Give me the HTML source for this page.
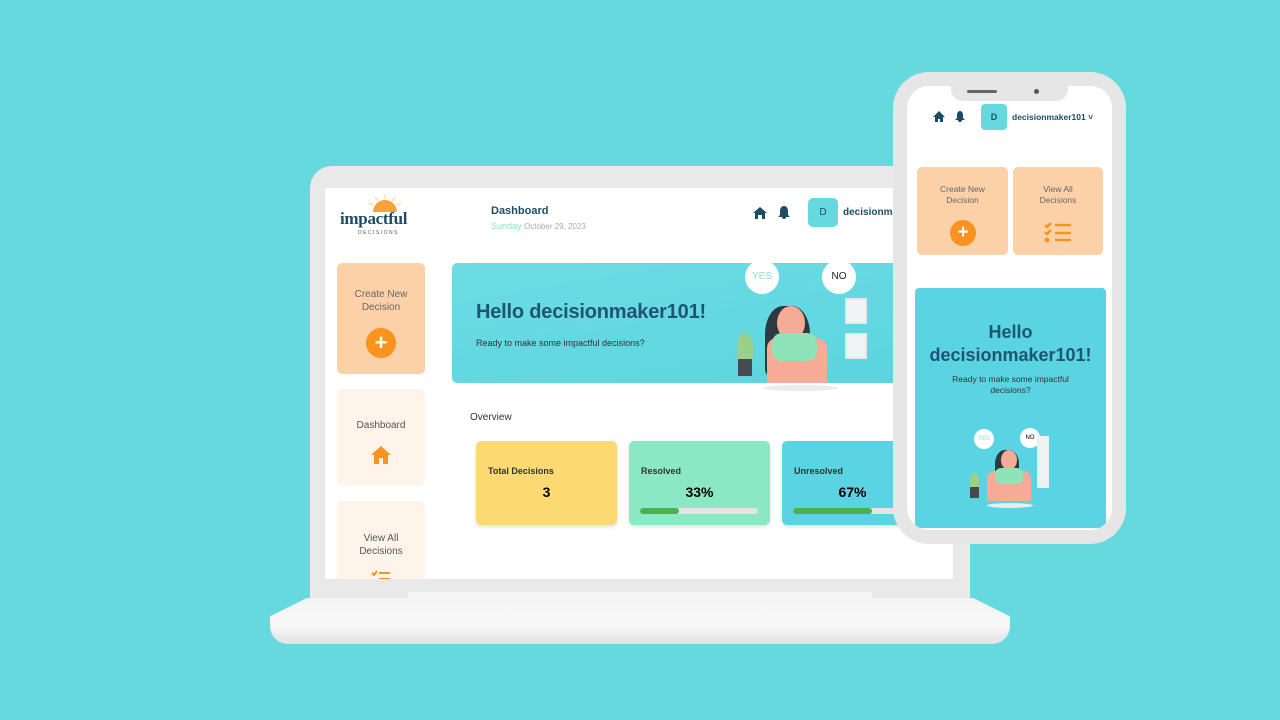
<!DOCTYPE html>
<html><head><meta charset="utf-8"><style>
*{margin:0;padding:0;box-sizing:border-box}
body{width:1280px;height:720px;background:#66d9df;position:relative;overflow:hidden;font-family:"Liberation Sans",sans-serif}
.a{position:absolute}
.lid{left:310px;top:166px;width:660px;height:440px;background:#e9e9e9;border-radius:22px 22px 0 0}
.scr{left:325px;top:188px;width:628px;height:391px;background:#fff;overflow:hidden}
.base{left:270px;top:598px;width:740px;height:46px;background:linear-gradient(#f4f4f4,#f7f7f7 60%,#e2e2e2);border-radius:4px 4px 18px 18px;clip-path:polygon(5% 0,95% 0,100% 40%,100% 100%,0 100%,0 40%)}
.hinge{left:408px;top:592px;width:464px;height:9px;background:#f5f5f5;border-radius:2px}
.card{border-radius:5px}
.dk{color:#1d4d66}
.bar{height:6px;background:#e4e4e4;border-radius:3px}
.bar i{display:block;height:6px;background:#4caf50;border-radius:3px}
.phone{left:893px;top:72px;width:233px;height:472px;background:#e6e6e6;border-radius:36px}
.pscr{left:907px;top:86px;width:205px;height:444px;background:#fff;border-radius:22px;overflow:hidden}
.plus{border-radius:50%;background:#f7931e;color:#fff;text-align:center;font-weight:bold}
</style></head><body>
<div class="a lid"></div>
<div class="a hinge"></div>
<div class="a base"></div>
<div class="a scr">
  <svg class="a" style="left:30px;top:4px" width="60" height="20"><path d="M18 20a12 12 0 0 1 24 0z" fill="#f7a33a"/><g stroke="#f7c57a" stroke-width="0.8"><line x1="30" y1="2" x2="30" y2="7"/><line x1="20" y1="5" x2="23" y2="9"/><line x1="40" y1="5" x2="37" y2="9"/><line x1="14" y1="11" x2="18" y2="13"/><line x1="46" y1="11" x2="42" y2="13"/></g></svg>
  <div class="a dk" style="left:15px;top:21px;font-family:'Liberation Serif',serif;font-size:17px;font-weight:bold;color:#1d4d66;letter-spacing:-0.3px">impactful</div>
  <div class="a" style="left:33px;top:42px;font-size:5px;letter-spacing:1.5px;color:#555">DECISIONS</div>
  <div class="a dk" style="left:166px;top:17px;font-size:11px;font-weight:bold">Dashboard</div>
  <div class="a" style="left:166px;top:33px;font-size:9px;color:#8fe3c0">Sunday <span style="color:#aaa;font-size:8px">October 29, 2023</span></div>
  <svg class="a" style="left:428px;top:18px" width="14" height="13"><path d="M7 1 L14 7 H12 V13 H9 V9 H5 V13 H2 V7 H0z" fill="#1d4d66"/></svg>
  <svg class="a" style="left:453px;top:17px" width="12" height="14"><path d="M6 1C3 1 2 4 2 6V10L0 12H12L10 10V6C10 4 9 1 6 1z M4 12a2 2 0 0 0 4 0z" fill="#1d4d66"/></svg>
  <div class="a" style="left:483px;top:10px;width:30px;height:29px;background:#66d9df;border-radius:5px;text-align:center;line-height:29px;font-size:10px;color:#1d4d66">D</div>
  <div class="a dk" style="left:518px;top:19px;font-size:10px;font-weight:bold;white-space:nowrap">decisionmaker101</div>
  <div class="a card" style="left:12px;top:75px;width:88px;height:111px;background:#fdd1a8"></div>
  <div class="a" style="left:12px;top:100px;width:88px;text-align:center;font-size:10px;color:#666;line-height:13px">Create New<br>Decision</div>
  <div class="a plus" style="left:41px;top:140px;width:30px;height:30px;font-size:22px;line-height:30px">+</div>
  <div class="a card" style="left:12px;top:201px;width:88px;height:97px;background:#fff4ea"></div>
  <div class="a" style="left:12px;top:232px;width:88px;text-align:center;font-size:10px;color:#555">Dashboard</div>
  <svg class="a" style="left:46px;top:257px" width="20" height="19"><path d="M10 1 L20 10 H17 V19 H12 V13 H8 V19 H3 V10 H0z" fill="#f7931e"/></svg>
  <div class="a card" style="left:12px;top:313px;width:88px;height:90px;background:#fff4ea"></div>
  <div class="a" style="left:12px;top:344px;width:88px;text-align:center;font-size:10px;color:#555;line-height:13px">View All<br>Decisions</div>
  <svg class="a" style="left:46px;top:382px" width="20" height="10"><g stroke="#f7931e" stroke-width="2"><path d="M1 3l2 2 3-4" fill="none"/><line x1="8" y1="3" x2="19" y2="3"/><line x1="8" y1="9" x2="19" y2="9"/></g></svg>
  <div class="a" style="left:127px;top:75px;width:520px;height:120px;background:linear-gradient(170deg,#6ddce4,#5ad4df);border-radius:5px"></div>
  <div class="a dk" style="left:151px;top:113px;font-size:20px;font-weight:bold;color:#1f5570;letter-spacing:-0.2px">Hello decisionmaker101!</div>
  <div class="a" style="left:151px;top:150px;font-size:9px;color:#333">Ready to make some impactful decisions?</div>
  <div class="a" style="left:420px;top:72px;width:34px;height:34px;border-radius:50%;background:#fff;text-align:center;line-height:34px;font-size:10px;color:#8fe3c0">YES</div>
  <div class="a" style="left:497px;top:72px;width:34px;height:34px;border-radius:50%;background:#fff;text-align:center;line-height:34px;font-size:10px;color:#222">NO</div>
  <div class="a" style="left:520px;top:110px;width:22px;height:26px;background:#f1f4f4;border:2px solid #e4eaea"></div>
  <div class="a" style="left:520px;top:145px;width:22px;height:26px;background:#f1f4f4;border:2px solid #e4eaea"></div>
  <div class="a" style="left:413px;top:170px;width:14px;height:18px;background:#444c52"></div>
  <div class="a" style="left:412px;top:145px;width:16px;height:26px;background:#9bd08a;border-radius:50% 50% 0 0"></div>
  <div class="a" style="left:440px;top:118px;width:45px;height:70px;background:#2f3a40;border-radius:40% 40% 10% 10%"></div>
  <div class="a" style="left:452px;top:118px;width:28px;height:34px;background:#f6ab96;border-radius:50%"></div>
  <div class="a" style="left:442px;top:150px;width:60px;height:45px;background:#f6ab96;border-radius:10px 10px 0 0"></div>
  <div class="a" style="left:447px;top:145px;width:45px;height:28px;background:#8fe3b8;border-radius:10px"></div>
  <div class="a" style="left:438px;top:197px;width:75px;height:6px;background:#e9ecec;border-radius:50%"></div>
  <div class="a" style="left:145px;top:224px;font-size:10px;color:#333">Overview</div>
  <div class="a card" style="left:151px;top:253px;width:141px;height:84px;background:#fdd974;box-shadow:0 2px 4px rgba(0,0,0,.12)"></div>
  <div class="a" style="left:163px;top:278px;font-size:9px;font-weight:bold;color:#333">Total Decisions</div>
  <div class="a" style="left:151px;top:296px;width:141px;text-align:center;font-size:14px;font-weight:bold">3</div>
  <div class="a card" style="left:304px;top:253px;width:141px;height:84px;background:#8ae9c4;box-shadow:0 2px 4px rgba(0,0,0,.12)"></div>
  <div class="a" style="left:316px;top:278px;font-size:9px;font-weight:bold;color:#333">Resolved</div>
  <div class="a" style="left:304px;top:296px;width:141px;text-align:center;font-size:14px;font-weight:bold">33%</div>
  <div class="a bar" style="left:315px;top:320px;width:118px"><i style="width:33%"></i></div>
  <div class="a card" style="left:457px;top:253px;width:141px;height:84px;background:#5ad4e2;box-shadow:0 2px 4px rgba(0,0,0,.12)"></div>
  <div class="a" style="left:469px;top:278px;font-size:9px;font-weight:bold;color:#333">Unresolved</div>
  <div class="a" style="left:457px;top:296px;width:141px;text-align:center;font-size:14px;font-weight:bold">67%</div>
  <div class="a bar" style="left:468px;top:320px;width:118px"><i style="width:67%"></i></div>
</div>
<div class="a phone"></div>
<div class="a pscr">
  <div class="a" style="left:44px;top:0;width:117px;height:15px;background:#e6e6e6;border-radius:0 0 12px 12px"></div>
  <div class="a" style="left:60px;top:4px;width:30px;height:3px;background:#666;border-radius:2px"></div>
  <div class="a" style="left:127px;top:3px;width:5px;height:5px;background:#555;border-radius:50%"></div>
  <svg class="a" style="left:26px;top:25px" width="12" height="11"><path d="M6 0 L12 6 H10 V11 H7 V8 H5 V11 H2 V6 H0z" fill="#1d4d66"/></svg>
  <svg class="a" style="left:48px;top:24px" width="10" height="12"><path d="M5 1C3 1 2 3 2 5V8L0 10H10L8 8V5C8 3 7 1 5 1z M3 10a2 2 0 0 0 4 0z" fill="#1d4d66"/></svg>
  <div class="a" style="left:74px;top:18px;width:26px;height:26px;background:#66d9df;border-radius:4px;text-align:center;line-height:26px;font-size:9px;color:#1d4d66;font-weight:bold">D</div>
  <div class="a dk" style="left:105px;top:26px;font-size:8.5px;font-weight:bold;white-space:nowrap">decisionmaker101 ˅</div>
  <div class="a card" style="left:10px;top:81px;width:91px;height:88px;background:#fdd1a8"></div>
  <div class="a" style="left:10px;top:98px;width:91px;text-align:center;font-size:8.5px;color:#666;line-height:11px">Create New<br>Decision</div>
  <div class="a plus" style="left:43px;top:134px;width:26px;height:26px;font-size:19px;line-height:26px">+</div>
  <div class="a card" style="left:106px;top:81px;width:90px;height:88px;background:#fdd1a8"></div>
  <div class="a" style="left:106px;top:98px;width:90px;text-align:center;font-size:8.5px;color:#666;line-height:11px">View All<br>Decisions</div>
  <svg class="a" style="left:137px;top:136px" width="28" height="21"><g stroke="#f7931e" stroke-width="2.4" fill="none"><path d="M1 3l2 2 4-4"/><path d="M1 10l2 2 4-4"/><circle cx="3" cy="18" r="1.2" fill="#f7931e"/><line x1="11" y1="3" x2="27" y2="3"/><line x1="11" y1="11" x2="27" y2="11"/><line x1="11" y1="18" x2="27" y2="18"/></g></svg>
  <div class="a" style="left:8px;top:202px;width:191px;height:240px;background:#5ad4e2;border-radius:4px"></div>
  <div class="a dk" style="left:8px;top:235px;width:191px;text-align:center;font-size:18px;font-weight:bold;line-height:23px;color:#1f5570">Hello<br>decisionmaker101!</div>
  <div class="a" style="left:8px;top:288px;width:191px;text-align:center;font-size:8.5px;color:#333;line-height:11px">Ready to make some impactful<br>decisions?</div>
  <div class="a" style="left:67px;top:343px;width:20px;height:20px;border-radius:50%;background:#fff;font-size:6px;color:#8fe3c0;text-align:center;line-height:20px">YES</div>
  <div class="a" style="left:113px;top:342px;width:20px;height:20px;border-radius:50%;background:#fff;font-size:6px;text-align:center;line-height:20px">NO</div>
  <div class="a" style="left:130px;top:350px;width:12px;height:52px;background:#eef2f2"></div>
  <div class="a" style="left:88px;top:364px;width:24px;height:35px;background:#2f3a40;border-radius:40%"></div>
  <div class="a" style="left:94px;top:364px;width:16px;height:20px;background:#f6ab96;border-radius:50%"></div>
  <div class="a" style="left:80px;top:385px;width:44px;height:30px;background:#f6ab96;border-radius:8px 8px 0 0"></div>
  <div class="a" style="left:88px;top:382px;width:28px;height:16px;background:#8fe3b8;border-radius:6px"></div>
  <div class="a" style="left:63px;top:400px;width:9px;height:12px;background:#444c52"></div>
  <div class="a" style="left:63px;top:387px;width:9px;height:14px;background:#9bd08a;border-radius:50% 50% 0 0"></div>
  <div class="a" style="left:80px;top:417px;width:46px;height:5px;background:#e9ecec;border-radius:50%"></div>
</div>
</body></html>
